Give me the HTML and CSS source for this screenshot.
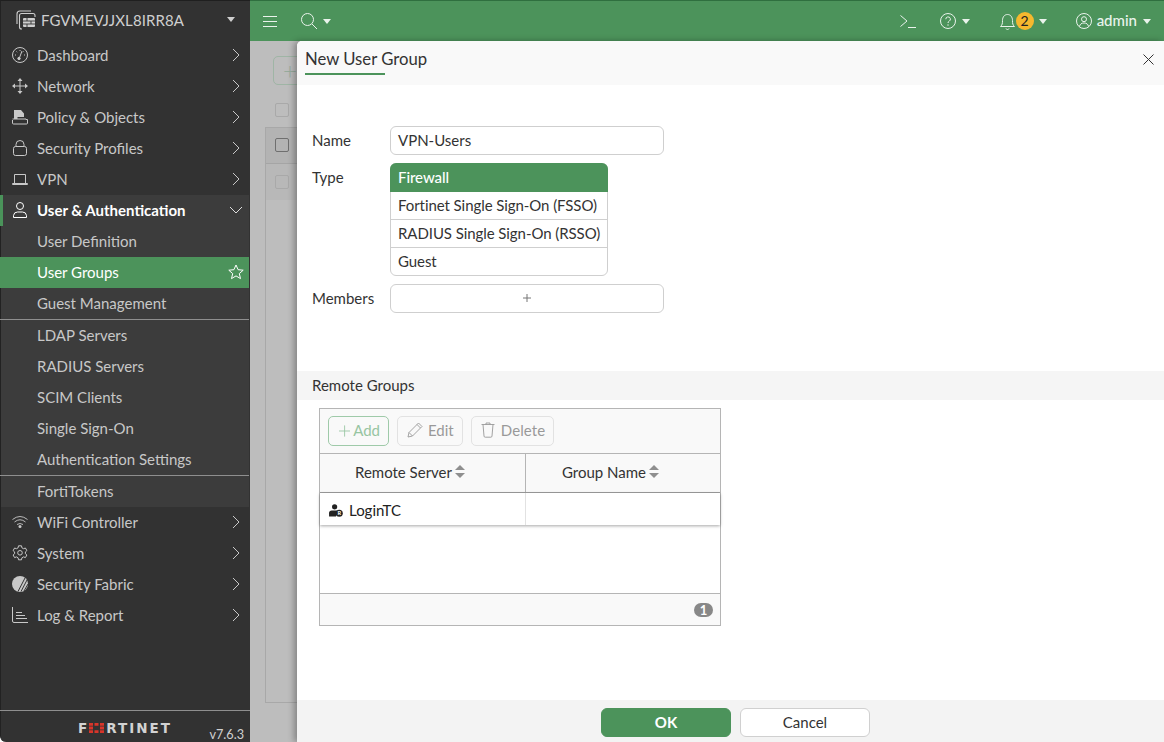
FILE: index.html
```html
<!DOCTYPE html>
<html lang="en">
<head>
    <meta charset="UTF-8">
    <meta name="viewport" content="width=device-width, initial-scale=1.0">
    <title>New User Group</title>
    <link rel="stylesheet" href="styles.css">
</head>
<body>
    <svg class="defs" width="0" height="0">
        <symbol id="chev" viewBox="0 0 10 16"><path d="M2 2l6 6-6 6" fill="none" stroke="currentColor" stroke-width="1"/></symbol>
    </svg>
    <div class="app">
        <!-- left navigation -->
        <aside class="sidebar">
            <div class="device">
                <svg class="device-icon" viewBox="0 0 20 20" fill="none" stroke="currentColor" stroke-width="1.1">
                    <path d="M1 14V4a3 3 0 0 1 3-3h11"/>
                    <path d="M6 19h-.5a2 2 0 0 1-2-2V5.500a2 2 0 0 1 2-2H17a2 2 0 0 1 2 2V7"/>
                    <rect x="7" y="8" width="12" height="9" rx="1" fill="currentColor" stroke="none"/>
                    <path d="M7 11h12M7 14h12M11 8v3M15 11v3M11 14v3" stroke="#333" stroke-width=".9"/>
                </svg>
                <span class="device-name">FGVMEVJJXL8IRR8A</span>
                <span class="caret"></span>
            </div>
            <nav class="menu">
                <a class="item">
                    <svg class="ico" viewBox="0 0 16 16" fill="none" stroke="currentColor"><circle cx="8" cy="8" r="7.5"/><path d="M7 12l3-8M3 8h1M8 3v1M4.5 4.500l.7.7M12 8h1M11.500 4.500l-.7.7"/><circle cx="7" cy="11.500" r="1.200" fill="currentColor"/></svg>
                    <span>Dashboard</span><svg class="chev"><use href="#chev"/></svg>
                </a>
                <a class="item">
                    <svg class="ico" viewBox="0 0 16 16" fill="currentColor"><path d="M8 1v14M1 8h14" stroke="currentColor" fill="none"/><path d="M8 0l2.500 3h-5zM8 16l2.500-3h-5zM0 8l3-2.500v5zM16 8l-3-2.500v5z"/></svg>
                    <span>Network</span><svg class="chev"><use href="#chev"/></svg>
                </a>
                <a class="item">
                    <svg class="ico" viewBox="0 0 16 16" fill="none" stroke="currentColor"><path d="M2 9V1h7l3 3.500V8H5.500v2H2z" fill="currentColor" stroke="none"/><path d="M.5 11v3a1 1 0 0 0 1 1h13a1 1 0 0 0 1-1v-3.500H14V10H.5"/></svg>
                    <span>Policy &amp; Objects</span><svg class="chev"><use href="#chev"/></svg>
                </a>
                <a class="item">
                    <svg class="ico" viewBox="0 0 16 16" fill="none" stroke="currentColor"><rect x="1.500" y="6.500" width="13" height="9" rx="2"/><path d="M4 6.500v-2a4 4 0 0 1 8 0v2"/></svg>
                    <span>Security Profiles</span><svg class="chev"><use href="#chev"/></svg>
                </a>
                <a class="item">
                    <svg class="ico" viewBox="0 0 16 16" fill="none" stroke="currentColor"><path d="M2.500 12V3.500h11V12"/><path d="M.5 12.500h15v1H.5z"/></svg>
                    <span>VPN</span><svg class="chev"><use href="#chev"/></svg>
                </a>
                <div class="group">
                    <a class="item item-open">
                        <svg class="ico" viewBox="0 0 16 16" fill="none" stroke="currentColor"><circle cx="8" cy="4" r="3.500"/><path d="M1.500 15.500h13v-2a4 4 0 0 0-4-3.500h-5a4 4 0 0 0-4 3.500z"/></svg>
                        <span>User &amp; Authentication</span><svg class="chev chev-down"><use href="#chev"/></svg>
                    </a>
                    <a class="item sub">User Definition</a>
                    <a class="item sub active">
                        <span>User Groups</span>
                        <svg class="star" viewBox="0 0 16 16" fill="none" stroke="currentColor"><path d="M8 1l2.100 4.700 5.100.5-3.900 3.400 1.200 5L8 11.900l-4.500 2.700 1.200-5L.8 6.200l5.100-.5z"/></svg>
                    </a>
                    <a class="item sub">Guest Management</a>
                    <div class="rule"></div>
                    <a class="item sub">LDAP Servers</a>
                    <a class="item sub">RADIUS Servers</a>
                    <a class="item sub">SCIM Clients</a>
                    <a class="item sub">Single Sign-On</a>
                    <a class="item sub">Authentication Settings</a>
                    <div class="rule"></div>
                    <a class="item sub">FortiTokens</a>
                </div>
                <a class="item">
                    <svg class="ico" viewBox="0 0 16 16" fill="none" stroke="currentColor" stroke-width=".9"><path d="M.5 5.500Q8-.5 15.500 5.500M2.500 8Q8 3.500 13.500 8M5 10.500q3-2 6 0"/><circle cx="8" cy="12.500" r="1.500" fill="currentColor" stroke="none"/></svg>
                    <span>WiFi Controller</span><svg class="chev"><use href="#chev"/></svg>
                </a>
                <a class="item">
                    <svg class="ico" viewBox="0 0 16 16" fill="none" stroke="currentColor"><path d="M6.500.8h3l.4 2 1.600.9 1.900-.7 1.500 2.600-1.500 1.300v1.800l1.500 1.300-1.500 2.600-1.900-.7-1.600.9-.4 2h-3l-.4-2-1.600-.9-1.900.7L1.100 10l1.500-1.300V6.900L1.100 5.600 2.600 3l1.900.7 1.600-.9z"/><circle cx="8" cy="7.800" r="2.300"/></svg>
                    <span>System</span><svg class="chev"><use href="#chev"/></svg>
                </a>
                <a class="item">
                    <svg class="ico" viewBox="0 0 16 16"><circle cx="8" cy="8" r="8" fill="currentColor"/><path d="M6 15.500L13 2M9 15.500L15 4M12 15l4-7" stroke="#333" stroke-width="1" fill="none"/></svg>
                    <span>Security Fabric</span><svg class="chev"><use href="#chev"/></svg>
                </a>
                <a class="item">
                    <svg class="ico" viewBox="0 0 16 16" fill="none" stroke="currentColor"><path d="M.5 0v14A1.500 1.500 0 0 0 2 15.500h14M4 5.500h6M4 8.500h9M4 11.500h11"/></svg>
                    <span>Log &amp; Report</span><svg class="chev"><use href="#chev"/></svg>
                </a>
            </nav>
            <div class="brand">
                <span class="logo">F<svg class="logo-o" viewBox="0 0 15 10" fill="#d8352a"><path d="M0 0h4v2.800H0zM5.500 0h4v2.800h-4zM11 0h4v2.800h-4zM0 3.600h4v2.800H0zM11 3.600h4v2.800h-4zM0 7.200h4V10H0zM5.500 7.200h4V10h-4zM11 7.200h4V10h-4z"/></svg>RTINET</span>
                <span class="version">v7.6.3</span>
            </div>
        </aside>

        <div class="right">
            <header class="topbar">
                <svg class="hamburger" viewBox="0 0 14 11" stroke="currentColor"><path d="M0 .5h14M0 5.500h14M0 10.500h14"/></svg>
                <svg class="search" viewBox="0 0 16 16" fill="none" stroke="currentColor"><circle cx="6.500" cy="6.500" r="6"/><path d="M11 11l5 5"/></svg>
                <span class="caret caret-white"></span>
                <div class="top-tools">
                    <svg class="term" viewBox="0 0 16 13" fill="none" stroke="currentColor"><path d="M.5.500L7 6 .5 11.500M8 12.500h8"/></svg>
                    <svg class="top-ico help" viewBox="0 0 16 16" fill="none" stroke="currentColor"><circle cx="8" cy="8" r="7.5"/><path d="M5.800 6.200a2.300 2.300 0 1 1 3.400 2c-.8.500-1.200.9-1.200 1.800"/><circle cx="8" cy="12" r=".7" fill="currentColor" stroke="none"/></svg>
                    <span class="caret caret-white"></span>
                    <svg class="top-ico bell" viewBox="0 0 15 17" fill="none" stroke="currentColor"><path d="M.5 13.500h14c-1.800-1.500-2-3-2-6 0-3.500-2-6-5-6s-5 2.500-5 6c0 3-.2 4.500-2 6z"/><path d="M6 15.500a1.600 1.600 0 0 0 3 0"/></svg>
                    <span class="badge">2</span>
                    <span class="caret caret-white"></span>
                    <svg class="top-ico user" viewBox="0 0 16 16" fill="none" stroke="currentColor"><circle cx="8" cy="8" r="7.5"/><circle cx="8" cy="6.200" r="2.500"/><path d="M3.500 13.500c.5-2.500 2-3.500 4.500-3.500s4 1 4.500 3.500"/></svg>
                    <span class="admin">admin</span>
                    <span class="caret caret-white"></span>
                </div>
            </header>

            <main class="content">
                <!-- page behind the slide-over -->
                <div class="bg-btn"><span>+</span></div>
                <div class="bg-check bg-check-head"></div>
                <div class="bg-table">
                    <div class="bg-row bg-row-a"><div class="bg-check bg-check-dark"></div></div>
                    <div class="bg-row bg-row-b"><div class="bg-check"></div></div>
                </div>

                <section class="panel">
                    <div class="panel-head">
                        <h2>New User Group</h2>
                        <svg class="close" viewBox="0 0 11 11" stroke="currentColor"><path d="M.5.500l10 10M10.500.500l-10 10"/></svg>
                    </div>
                    <div class="panel-body">
                        <div class="field">
                            <label>Name</label>
                            <div class="input">VPN-Users</div>
                        </div>
                        <div class="field">
                            <label class="label-type">Type</label>
                            <div class="type-list">
                                <div class="type-opt selected">Firewall</div>
                                <div class="type-opt">Fortinet Single Sign-On (FSSO)</div>
                                <div class="type-opt">RADIUS Single Sign-On (RSSO)</div>
                                <div class="type-opt">Guest</div>
                            </div>
                        </div>
                        <div class="field">
                            <label>Members</label>
                            <div class="input input-add">
                                <svg viewBox="0 0 8 8" stroke="currentColor"><path d="M4 0v8M0 4h8"/></svg>
                            </div>
                        </div>

                        <div class="section-title">Remote Groups</div>

                        <div class="grid">
                            <div class="toolbar">
                                <button class="tool tool-add">
                                    <svg viewBox="0 0 13 13" stroke="currentColor"><path d="M6.500 0v13M0 6.500h13"/></svg>Add
                                </button>
                                <button class="tool tool-edit">
                                    <svg viewBox="0 0 16 16" fill="none" stroke="currentColor" stroke-width=".9"><path d="M1 15l1-4.500L11.500 1 15 4.500 5.500 14z"/><path d="M2 10.500L5.500 14M10 2.500L13.500 6"/></svg>Edit
                                </button>
                                <button class="tool tool-del">
                                    <svg viewBox="0 0 14 16" fill="none" stroke="currentColor" stroke-width=".9"><path d="M.5 2.500h13M5 2.500V1h4v1.500M2 2.500L3 14a1.200 1.200 0 0 0 1.200 1.200h5.600A1.200 1.200 0 0 0 11 14l1-11.500"/></svg>Delete
                                </button>
                            </div>
                            <div class="grid-head">
                                <div class="col col-a">Remote Server<span class="sort"></span></div>
                                <div class="col col-b">Group Name<span class="sort"></span></div>
                            </div>
                            <div class="grid-row">
                                <div class="cell col-a">
                                    <svg class="server-ico" viewBox="0 0 15 14"><circle cx="6" cy="3" r="2.800" fill="#222"/><path d="M0 13.500V10a3 3 0 0 1 3-3h6l-1.500 6.500z" fill="#222"/><circle cx="11" cy="10" r="3.800" fill="#222"/><text class="server-r" x="11" y="12.200">R</text></svg>
                                    LoginTC
                                </div>
                                <div class="cell col-b"></div>
                            </div>
                            <div class="grid-empty"></div>
                            <div class="grid-foot"><span class="count">1</span></div>
                        </div>
                    </div>
                    <div class="panel-foot">
                        <button class="btn btn-ok">OK</button>
                        <button class="btn">Cancel</button>
                    </div>
                </section>
            </main>
        </div>
    </div>
</body>
</html>
```

FILE: styles.css
```css
* {
    margin: 0;
    padding: 0;
    box-sizing: border-box;
}

html, body {
    height: 100%;
    overflow: hidden;
}

body {
    font-family: Lato, "Liberation Sans", sans-serif;
    font-size: 15px;
    color: #333;
    background: #fff;
}

.defs {
    position: absolute;
}

.app {
    display: flex;
    height: 742px;
}

/* sidebar */
.sidebar {
    width: 250px;
    flex: none;
    display: flex;
    flex-direction: column;
    background: #323232;
    color: #c8c8c8;
    border-top: 1px solid #1f1f1f;
    border-left: 1px solid #222;
    border-bottom-left-radius: 6px;
}

.device {
    height: 39px;
    display: flex;
    align-items: center;
    padding-left: 15px;
    padding-bottom: 2px;
    color: #cfcfcf;
}

.device-icon {
    width: 20px;
    height: 20px;
    margin-right: 5px;
}

.device-name {
    flex: 1;
    letter-spacing: 0.1px;
}

.device .caret {
    margin-right: 15px;
}

.caret {
    display: inline-block;
    width: 0;
    height: 0;
    border-left: 4px solid transparent;
    border-right: 4px solid transparent;
    border-top: 5px solid #cfcfcf;
}

.caret-white {
    border-top-color: #eaf3ec;
}

.menu {
    flex: 1;
}

.item {
    height: 31px;
    display: flex;
    align-items: center;
    padding: 0 9px 2px 11px;
    color: #c8c8c8;
}

.item span {
    flex: 1;
}

.ico {
    width: 16px;
    height: 16px;
    margin-right: 9px;
    flex: none;
}

.chev {
    width: 10px;
    height: 16px;
}

.chev-down {
    transform: rotate(90deg);
}

.group {
    margin-right: 1px;
    background: #3c3c3c;
}

.item-open {
    color: #fff;
    font-weight: 700;
    box-shadow: inset 3px 0 0 0 #4a935a;
    margin-left: -1px;
    padding-left: 12px;
    padding-right: 8px;
}

.item-open .chev {
    color: #ddd;
}

.sub {
    padding-left: 36px;
}

.active {
    background: #4c935b;
    color: #fff;
    padding-right: 5px;
    margin-left: -1px;
    padding-left: 37px;
}

.star {
    width: 16px;
    height: 16px;
}

.rule {
    height: 1px;
    margin-left: -1px;
    background: #8f8f8f;
}

.brand {
    height: 32px;
    margin-left: -1px;
    border-top: 1px solid #8f8f8f;
    position: relative;
    display: flex;
}

.logo {
    margin: 10px 0 0 78px;
    font-family: "DejaVu Sans", sans-serif;
    font-weight: 700;
    font-size: 13.5px;
    line-height: 14px;
    letter-spacing: 2px;
    display: flex;
    align-items: center;
    height: 14px;
    color: #d2d2d2;
}

.logo-o {
    width: 15px;
    height: 10px;
    margin-right: 2px;
}

.version {
    position: absolute;
    right: 6px;
    bottom: 0;
    font-size: 12.7px;
    line-height: 16px;
    color: #d0d0d0;
}

/* top bar */
.right {
    flex: 1;
    display: flex;
    flex-direction: column;
    min-width: 0;
}

.topbar {
    height: 41px;
    flex: none;
    display: flex;
    align-items: center;
    background: #4c935b;
    border-top: 1px solid #2f6f3f;
    color: #eaf3ec;
    padding: 0 13px;
}

.hamburger {
    width: 14px;
    height: 11px;
    margin-right: 24px;
}

.search {
    width: 16px;
    height: 16px;
    margin-right: 6px;
}

.top-tools {
    margin-left: auto;
    display: flex;
    align-items: center;
}

.term {
    width: 16px;
    height: 13px;
    margin-right: 24px;
}

.top-ico {
    width: 16px;
    height: 16px;
}

.help {
    margin-right: 6px;
}

.help + .caret {
    margin-right: 30px;
}

.bell {
    width: 15px;
    height: 17px;
    margin-right: 1px;
}

.badge {
    width: 18px;
    height: 18px;
    border-radius: 50%;
    background: #f5b82e;
    color: #222;
    font-size: 14px;
    line-height: 18px;
    text-align: center;
    margin-right: 5px;
}

.badge + .caret {
    margin-right: 29px;
}

.user {
    margin-right: 5px;
}

.admin {
    font-weight: 500;
    margin: -2px 6px 0 0;
}

/* page behind the panel */
.content {
    flex: 1;
    position: relative;
    background: #bdbdbd;
    padding: 15px 0 39px 15px;
    display: flex;
    flex-direction: column;
}

.bg-btn {
    width: 50px;
    height: 29px;
    margin-left: 8px;
    border: 1px solid #9fb5a5;
    border-radius: 5px;
    color: #97ab9c;
    font-size: 24px;
    font-weight: 300;
    line-height: 26px;
    padding-left: 9px;
}

.bg-check {
    width: 14px;
    height: 14px;
    border: 1px solid #a9a9a9;
    border-radius: 2px;
}

.bg-check-head {
    margin: 18px 0 10px 10px;
}

.bg-check-dark {
    border-color: #6f6f6f;
}

.bg-table {
    flex: 1;
    border: 1px solid #a8a8a8;
}

.bg-row {
    padding: 0 0 1px 9px;
    display: flex;
    align-items: center;
}

.bg-row-a {
    height: 36px;
    background: #b3b3b3;
    border-bottom: 1px solid #a5a5a5;
}

.bg-row-b {
    height: 36px;
    background: #b8b8b8;
}

/* slide-over panel */
.panel {
    position: absolute;
    top: 0;
    right: 0;
    bottom: 0;
    left: 47px;
    display: flex;
    flex-direction: column;
    background: #fff;
    border-top-left-radius: 5px;
    box-shadow: -3px 0 6px rgba(0, 0, 0, 0.3);
}

.panel-head {
    height: 44px;
    flex: none;
    display: flex;
    align-items: flex-start;
    justify-content: space-between;
    background: #f9f9f9;
    padding: 7px 10px 0 8px;
    border-top-left-radius: 5px;
}

.panel-head h2 {
    font-size: 16.7px;
    font-weight: 400;
    line-height: 22px;
    color: #333;
}

.panel-head h2::after {
    content: "";
    display: block;
    width: 80px;
    height: 2px;
    margin-top: 3px;
    background: #4c935b;
}

.close {
    width: 11px;
    height: 11px;
    margin-top: 6px;
    color: #333;
}

.panel-body {
    flex: 1;
    padding-top: 41px;
}

.field {
    display: flex;
    margin: 0 0 8px 15px;
}

.field label {
    width: 78px;
    flex: none;
    line-height: 29px;
}

.field .label-type {
    line-height: 28px;
}

.input {
    width: 274px;
    height: 29px;
    border: 1px solid #cfcfcf;
    border-radius: 6px;
    padding-left: 7px;
    line-height: 27px;
    background: #fff;
}

.input-add {
    display: flex;
    align-items: center;
    justify-content: center;
    padding: 0 0 2px;
    color: #777;
}

.input-add svg {
    width: 8px;
    height: 8px;
}

.type-list {
    width: 218px;
    border: 1px solid #cfcfcf;
    border-radius: 6px;
}

.type-opt {
    height: 28px;
    line-height: 27px;
    padding-left: 7px;
    border-bottom: 1px solid #cfcfcf;
    white-space: nowrap;
    letter-spacing: -0.07px;
}

.type-opt:last-child {
    border-bottom: 0;
    height: 27px;
}

.selected {
    margin: -1px -1px 0;
    padding-left: 8px;
    background: #4c935b;
    color: #fff;
    font-weight: 500;
    line-height: 29px;
    border-bottom: 0;
    border-radius: 6px 6px 0 0;
    height: 29px;
}

.section-title {
    height: 29px;
    margin-top: 58px;
    padding-left: 15px;
    line-height: 29px;
    background: #f5f5f5;
}

.grid {
    width: 402px;
    margin: 8px 0 0 22px;
    border: 1px solid #b5b5b5;
}

.toolbar {
    height: 45px;
    display: flex;
    align-items: center;
    gap: 8px;
    padding-left: 8px;
    background: #f9f9f9;
    border-bottom: 1px solid #b5b5b5;
}

.tool {
    height: 30px;
    font: inherit;
    color: #999;
    background: #f9f9f9;
    border: 1px solid #e2e2e2;
    border-radius: 5px;
    display: flex;
    align-items: center;
    padding: 0 8px 2px 9px;
}

.tool svg {
    width: 16px;
    height: 16px;
    margin-right: 5px;
}

.tool-add {
    width: 61px;
    color: #97c5a2;
    border-color: #9fcaa9;
    padding-left: 10px;
}

.tool-add svg {
    width: 12px;
    height: 12px;
    margin: 1px 3px 0 0;
}

.tool-del {
    letter-spacing: 0.1px;
}

.tool-del svg {
    width: 14px;
    margin-right: 6px;
}

.grid-head {
    height: 39px;
    display: flex;
    background: #f9f9f9;
    border-bottom: 1px solid #9f9f9f;
}

.col {
    display: flex;
    align-items: center;
    justify-content: center;
    padding: 0 24px 2px 0;
    color: #333;
}

.col-a {
    width: 206px;
    border-right: 1px solid #b5b5b5;
}

.col-b {
    flex: 1;
}

.sort {
    width: 11px;
    height: 13px;
    margin: -1px 0 0 3px;
    position: relative;
}

.sort::before, .sort::after {
    content: "";
    position: absolute;
    left: 0;
    border-left: 5.5px solid transparent;
    border-right: 5.5px solid transparent;
}

.sort::before {
    top: 0;
    border-bottom: 5.5px solid #8f8f8f;
}

.sort::after {
    bottom: 0;
    border-top: 5.5px solid #8f8f8f;
}

.grid-row {
    height: 32px;
    display: flex;
    box-shadow: 0 1px 3px rgba(0, 0, 0, 0.35);
    position: relative;
}

.cell {
    display: flex;
    align-items: center;
    padding: 2px 0 0 9px;
    color: #222;
}

.cell.col-a {
    border-right-color: #e2e2e2;
}

.server-ico {
    width: 14px;
    height: 13px;
    margin-right: 6px;
}

.server-r {
    fill: #fff;
    font-size: 6px;
    font-weight: 700;
    text-anchor: middle;
}

.grid-empty {
    height: 69px;
    border-bottom: 1px solid #b5b5b5;
}

.grid-foot {
    height: 31px;
    display: flex;
    align-items: center;
    justify-content: flex-end;
    padding-right: 7px;
    background: #f9f9f9;
}

.count {
    width: 19px;
    height: 14px;
    border-radius: 7px;
    background: #888;
    color: #fff;
    font-size: 13px;
    font-weight: 700;
    line-height: 14px;
    text-align: center;
}

.panel-foot {
    height: 42px;
    flex: none;
    display: flex;
    justify-content: center;
    align-items: flex-start;
    gap: 9px;
    padding: 8px 0 0 10px;
    background: #f3f3f3;
}

.btn {
    width: 130px;
    height: 29px;
    font: inherit;
    color: #333;
    background: #fff;
    border: 1px solid #d0d0d0;
    border-radius: 6px;
    padding-bottom: 2px;
}

.btn-ok {
    background: #4c935b;
    border-color: #4c935b;
    color: #fff;
    font-weight: 700;
}
```
